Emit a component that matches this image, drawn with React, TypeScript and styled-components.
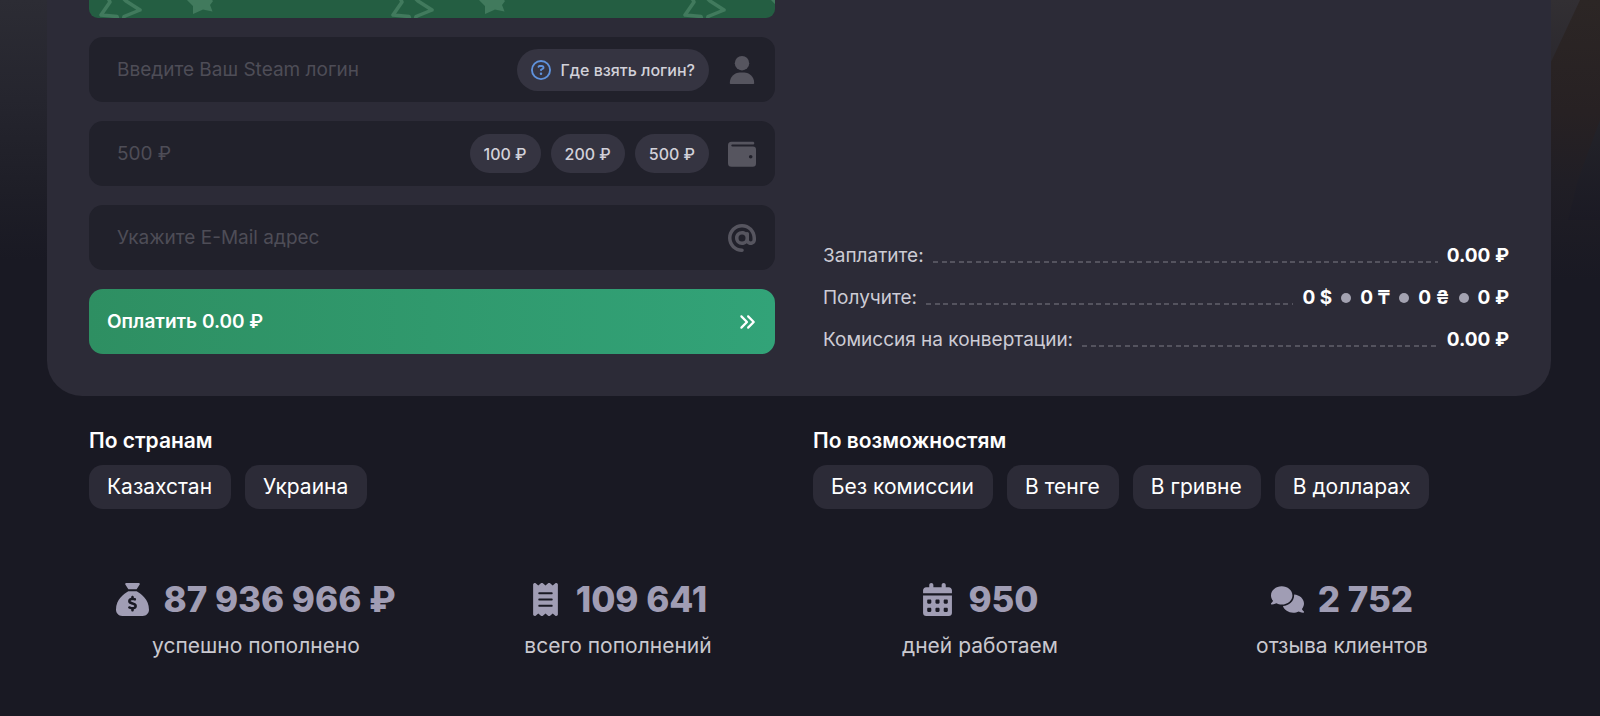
import React from 'react';
import styled, { createGlobalStyle } from 'styled-components';
import {
  FaAnglesRight,
  FaAt,
  FaCalendarDays,
  FaComments,
  FaReceipt,
  FaRegCircleQuestion,
  FaSackDollar,
} from 'react-icons/fa6';

const GlobalStyle = createGlobalStyle`
  *, *::before, *::after { box-sizing: border-box; }
  body {
    margin: 0;
    background: #191923;
    color: #fff;
    font-family: Inter, "Liberation Sans", sans-serif;
  }
  button, input { font-family: inherit; }
`;

const Page = styled.div`
  position: relative;
  min-height: 100vh;
  padding: 0 49px 42px 47px;
  background: linear-gradient(180deg, #2c2c34 0, #25252e 100px, #1e1e27 190px, #191923 260px);
`;

const Glow = styled.svg`
  position: absolute;
  top: 0;
  right: 0;
`;

const Card = styled.main`
  position: relative;
  display: grid;
  grid-template-columns: 1fr 1fr;
  gap: 48px;
  padding: 0 42px 42px;
  border-radius: 0 0 35px 35px;
  background: #2c2b37;
`;

const Form = styled.form`
  display: flex;
  flex-direction: column;
  gap: 19px;
  min-width: 0;
`;

const Banner = styled.div`
  height: 18px;
  overflow: hidden;
  border-radius: 0 0 9px 9px;
  background: #245e42;

  svg { display: block; }
`;

const Field = styled.div`
  display: flex;
  align-items: center;
  gap: 19px;
  height: 65px;
  padding: 0 19px 0 28px;
  border-radius: 14px;
  background: #21212b;
  color: #56555f;

  & > svg { flex: none; }
`;

const Input = styled.input`
  flex: 1;
  min-width: 0;
  padding: 0;
  border: 0;
  outline: 0;
  background: transparent;
  color: #fff;
  font-size: 19px;
  line-height: 28px;

  &::placeholder { color: #4e4d57; opacity: 1; }
`;

const Pills = styled.div`
  display: flex;
  gap: 10px;
`;

const Pill = styled.button<{ $tall?: boolean }>`
  display: flex;
  align-items: center;
  gap: 9px;
  height: ${(p) => (p.$tall ? 42 : 39)}px;
  padding: 0 14px;
  border: 0;
  border-radius: 21px;
  background: #353441;
  color: #d2d1d9;
  font-size: 16px;
  font-weight: 500;
  line-height: 24px;
  white-space: nowrap;
  cursor: pointer;

  svg { color: #5f92dc; }
`;

const PayButton = styled.button`
  display: flex;
  align-items: center;
  justify-content: space-between;
  height: 65px;
  padding: 0 19px 0 18px;
  border: 0;
  border-radius: 14px;
  background: linear-gradient(90deg, #2e8f62, #32a378);
  color: #fff;
  font-size: 19px;
  font-weight: 600;
  line-height: 28px;
  cursor: pointer;
`;

const Summary = styled.dl`
  display: flex;
  flex-direction: column;
  justify-content: flex-end;
  gap: 14px;
  min-width: 0;
  margin: 0;
`;

const SummaryRow = styled.div`
  display: flex;
  align-items: center;
  gap: 9px;
  font-size: 19px;
  line-height: 28px;
`;

const Term = styled.dt`
  color: #cdccd5;
`;

const Leader = styled.span`
  flex: 1;
  height: 2px;
  margin-top: 12px;
  background: repeating-linear-gradient(
    90deg,
    #54535e 0 5px,
    transparent 5px 9px,
    #54535e 9px 14px,
    transparent 14px 17px
  );
`;

const Value = styled.dd`
  display: flex;
  align-items: center;
  gap: 9px;
  margin: 0;
  font-weight: 700;
`;

const Dot = styled.span`
  width: 10px;
  height: 10px;
  border-radius: 50%;
  background: #a3a2b1;
`;

const Filters = styled.nav`
  display: grid;
  grid-template-columns: 1fr 1fr;
  padding: 31px 28px 0;
`;

const FilterGroup = styled.section`
  padding: 0 14px;
`;

const FilterTitle = styled.h2`
  margin: 0 0 10px;
  font-size: 21px;
  font-weight: 600;
  line-height: 28px;
`;

const Chips = styled.div`
  display: flex;
  flex-wrap: wrap;
  gap: 14px;
`;

const Chip = styled.a`
  padding: 8px 19px 8px 18px;
  border-radius: 14px;
  background: #2c2b37;
  color: #fff;
  font-size: 21px;
  line-height: 28px;
  text-decoration: none;
`;

const Stats = styled.section`
  display: grid;
  grid-template-columns: repeat(4, 1fr);
  padding: 69px 28px 0;
`;

const Stat = styled.div`
  display: flex;
  flex-direction: column;
  align-items: center;
  gap: 12px;
`;

const StatValue = styled.div`
  display: flex;
  align-items: center;
  gap: 14px;
  color: #a09db4;
  font-size: 35px;
  font-weight: 800;
  line-height: 42px;

  svg { width: 33px; }
`;

const StatLabel = styled.div`
  color: #c9c8cf;
  font-size: 21px;
  line-height: 28px;
`;

const UserIcon = () => (
  <svg width="28" height="28" viewBox="0 0 28 28" fill="currentColor" aria-hidden="true">
    <circle cx="14" cy="7.200" r="7.200" />
    <path d="M1.800 27.200C1.800 21 6.500 16.600 12 16.600h4c5.500 0 10.200 4.400 10.200 10.600 0 .5-.3.8-.8.8H2.600c-.5 0-.8-.3-.8-.8Z" />
  </svg>
);

const WalletIcon = () => (
  <svg width="28" height="28" viewBox="0 0 28 28" fill="currentColor" aria-hidden="true">
    <path
      fillRule="evenodd"
      d="M3.500 1.800h21.300c.9 0 1.500.6 1.500 1.400S25.700 4.600 24.800 4.600H4.300c-.6 0-1 .4-1 .9s.4.900 1 .900H25A3 3 0 0 1 28 9.400v14A3.300 3.300 0 0 1 24.700 26.700H3.500A3.500 3.500 0 0 1 0 23.200V5.300A3.500 3.500 0 0 1 3.500 1.800Zm19.200 13.200a1.800 1.800 0 1 0 0 3.600 1.800 1.800 0 0 0 0-3.600Z"
    />
  </svg>
);

const BannerStars = () => (
  <svg width="100%" height="18" aria-hidden="true">
    <defs>
      <pattern id="stars" width="292" height="40" patternUnits="userSpaceOnUse">
        <g stroke="#417a5d" strokeWidth="3.500" fill="none" strokeLinejoin="round">
          <path d="M17-6 21 2 12 15 28 16.500 31 28" />
          <path d="M28-8 37 1 51 10 35 16.500 33 28" />
        </g>
        <path
          d="M98 0 107-6 112-4 118-5 124 1 121 5 123.500 11.500 114 9.500 104 14 104 6Z"
          fill="#417a5d"
        />
      </pattern>
    </defs>
    <rect width="100%" height="18" fill="url(#stars)" />
  </svg>
);

const AMOUNTS = ['100 ₽', '200 ₽', '500 ₽'];
const RECEIVED = ['0 $', '0 ₸', '0 ₴', '0 ₽'];

const FILTERS = [
  { title: 'По странам', items: ['Казахстан', 'Украина'] },
  { title: 'По возможностям', items: ['Без комиссии', 'В тенге', 'В гривне', 'В долларах'] },
];

const STATS = [
  { Icon: FaSackDollar, value: '87 936 966 ₽', label: 'успешно пополнено' },
  { Icon: FaReceipt, value: '109 641', label: 'всего пополнений' },
  { Icon: FaCalendarDays, value: '950', label: 'дней работаем' },
  { Icon: FaComments, value: '2 752', label: 'отзыва клиентов' },
];

export default function App() {
  return (
    <>
      <GlobalStyle />
      <Page>
        <Glow width="60" height="280" viewBox="0 0 60 280" aria-hidden="true">
          <defs>
            <linearGradient id="warm" x1="0" y1="0" x2="0" y2="1">
              <stop offset="0" stopColor="#2c2625" />
              <stop offset="0.4" stopColor="#272123" />
              <stop offset="0.65" stopColor="#201e25" />
              <stop offset="1" stopColor="#191923" />
            </linearGradient>
            <linearGradient id="beam" x1="0" y1="0" x2="0" y2="1">
              <stop offset="0" stopColor="#322f33" />
              <stop offset="1" stopColor="#29272d" />
            </linearGradient>
            <linearGradient id="cool" x1="0" y1="0" x2="0" y2="1">
              <stop offset="0" stopColor="#232329" />
              <stop offset="1" stopColor="#1b1a24" />
            </linearGradient>
          </defs>
          <rect width="60" height="280" fill="url(#warm)" />
          <path d="M0 0H40L10 64 0 84Z" fill="url(#beam)" />
          <path d="M60 120 38 180 28 220H60Z" fill="url(#cool)" />
        </Glow>

        <Card>
          <Form onSubmit={(e) => e.preventDefault()}>
            <Banner>
              <BannerStars />
            </Banner>
            <Field>
              <Input aria-label="Логин Steam" placeholder="Введите Ваш Steam логин" />
              <Pill type="button" $tall>
                <FaRegCircleQuestion size={20} />
                Где взять логин?
              </Pill>
              <UserIcon />
            </Field>
            <Field>
              <Input aria-label="Сумма" placeholder="500 ₽" />
              <Pills>
                {AMOUNTS.map((amount) => (
                  <Pill key={amount} type="button">
                    {amount}
                  </Pill>
                ))}
              </Pills>
              <WalletIcon />
            </Field>
            <Field>
              <Input type="email" aria-label="E-Mail" placeholder="Укажите E-Mail адрес" />
              <FaAt size={28} />
            </Field>
            <PayButton type="submit">
              Оплатить 0.00 ₽
              <FaAnglesRight size={18} />
            </PayButton>
          </Form>

          <Summary>
            <SummaryRow>
              <Term>Заплатите:</Term>
              <Leader />
              <Value>0.00 ₽</Value>
            </SummaryRow>
            <SummaryRow>
              <Term>Получите:</Term>
              <Leader />
              <Value>
                {RECEIVED.map((sum, i) => (
                  <React.Fragment key={sum}>
                    {i > 0 && <Dot />}
                    <span>{sum}</span>
                  </React.Fragment>
                ))}
              </Value>
            </SummaryRow>
            <SummaryRow>
              <Term>Комиссия на конвертации:</Term>
              <Leader />
              <Value>0.00 ₽</Value>
            </SummaryRow>
          </Summary>
        </Card>

        <Filters>
          {FILTERS.map(({ title, items }) => (
            <FilterGroup key={title}>
              <FilterTitle>{title}</FilterTitle>
              <Chips>
                {items.map((item) => (
                  <Chip key={item} href="#">
                    {item}
                  </Chip>
                ))}
              </Chips>
            </FilterGroup>
          ))}
        </Filters>

        <Stats>
          {STATS.map(({ Icon, value, label }) => (
            <Stat key={label}>
              <StatValue>
                <Icon size={33} />
                {value}
              </StatValue>
              <StatLabel>{label}</StatLabel>
            </Stat>
          ))}
        </Stats>
      </Page>
    </>
  );
}
